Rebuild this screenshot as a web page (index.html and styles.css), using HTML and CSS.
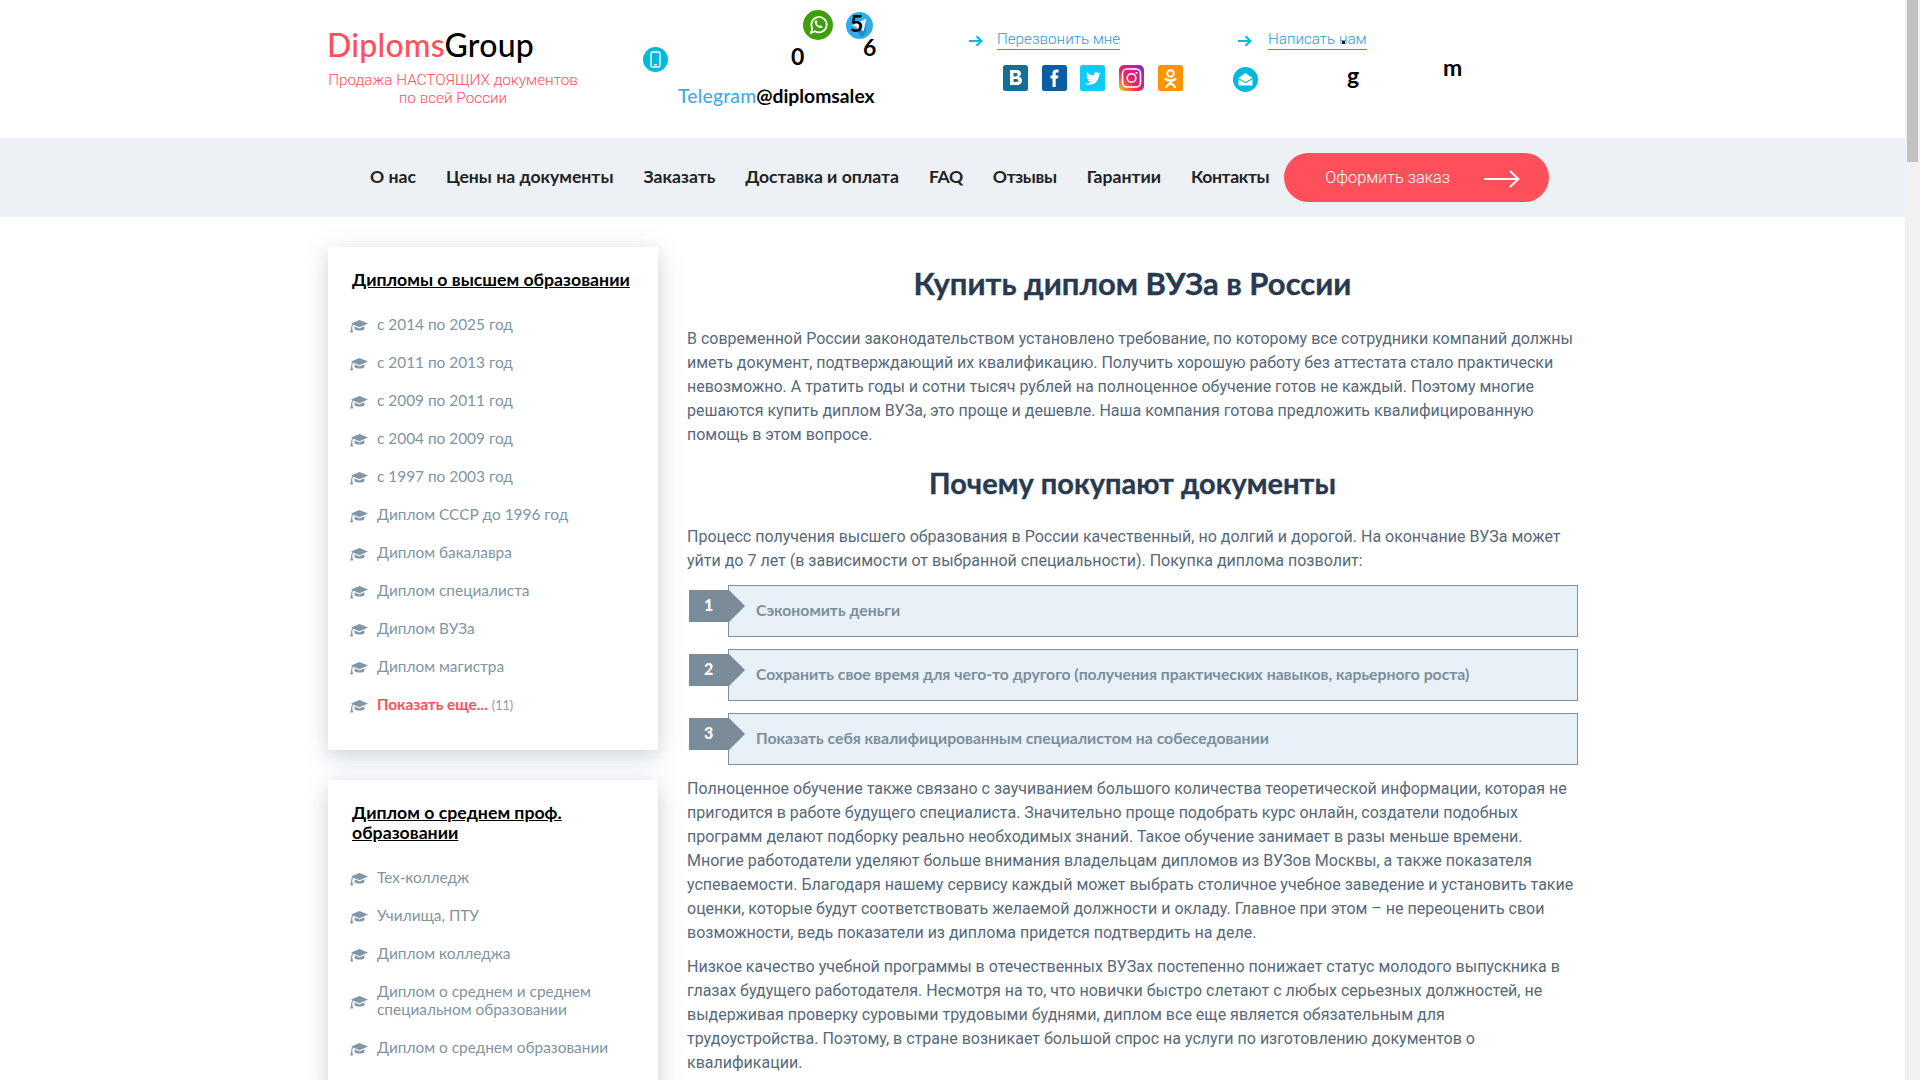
FILE: index.html
```html
<!DOCTYPE html>
<html lang="ru">
<head>
<meta charset="utf-8">
<title>Купить диплом ВУЗа в России</title>
<link rel="stylesheet" href="styles.css">
</head>
<body>
<svg class="defs" width="0" height="0" aria-hidden="true">
  <symbol id="cap" viewBox="0 0 18 14">
    <path d="M9.5 1 18 4.6 9.5 8.2 3.6 5.7 C2.6 6.6 2.2 7.8 2.2 9 L3 13.6 H0.2 L1.2 9 C1.2 7.4 1.7 6 2.6 5.2 L1 4.6Z"/>
    <path d="M4.6 7.3 9.5 9.4 14.4 7.3 V10.2 C13 12 6 12 4.6 10.2Z"/>
  </symbol>
  <symbol id="arrow" viewBox="0 0 14 12">
    <path d="M0 6H12M7.5 1.2 12.5 6 7.5 10.8" fill="none" stroke="#00b9dd" stroke-width="2"/>
  </symbol>
</svg>
<div class="page">
<header class="top">
  <div class="container top-inner">
    <div class="brand">
      <div class="logo"><span class="logo-red">Diploms</span>Group</div>
      <div class="slogan">Продажа НАСТОЯЩИХ документов<br>по всей России</div>
    </div>
    <div class="contact">
      <svg class="ic ic-wa" viewBox="0 0 30 30"><circle cx="15" cy="15" r="15" fill="#3f9e0c"/><path d="M8 23l1.3-4.6A7.7 7.7 0 1 1 12 21.2z" fill="none" stroke="#fff" stroke-width="1.8"/><path d="M12.3 10.6c.6-.6 1.3-.4 1.6.4l.4 1c.1.4-.5 1-.7 1.3.6 1.3 1.6 2.2 2.9 2.8.4-.3.9-1 1.3-.8l1.100.6c.7.4.7 1 .2 1.6-1 1-3 .7-5-.9-2.300-1.900-3-4.600-1.800-6z" fill="#fff"/></svg>
      <svg class="ic ic-tg" viewBox="0 0 28 28"><circle cx="14" cy="14" r="14" fill="#35ace1"/><path d="M14 24l-3-8 9-8 1 12-3 6a14 14 0 0 1-4-2z" fill="#1f8fc6"/><path d="M21 7 6 14l5 1.500 1.500 5 2.300-3 3.500 2.500z" fill="#fff"/><path d="M21 7l-9 9 .5 4.500 1-3.500z" fill="#b9dff2"/></svg>
      <svg class="ic ic-phone" viewBox="0 0 25 25"><circle cx="12.500" cy="12.500" r="12.500" fill="#00b9dd"/><rect x="8" y="5" width="9" height="15" rx="1.600" fill="none" stroke="#fff" stroke-width="1.400"/><path d="M11 17.800h3" stroke="#fff" stroke-width="1.200"/></svg>
      <span class="stray stray-5">5</span>
      <span class="stray stray-0">0</span>
      <span class="stray stray-6">6</span>
      <div class="tg-line"><span class="tg-blue">Telegram</span>@diplomsalex</div>
    </div>
    <div class="action action-call">
      <div class="action-link">
        <svg class="arrow"><use href="#arrow"/></svg>
        <a class="dash">Перезвонить мне</a>
      </div>
      <div class="socials">
        <svg class="soc" viewBox="0 0 25 26"><rect width="25" height="26" rx="2.500" fill="#116f98"/><path d="M7 5h6.500c3 0 4.500 1.400 4.500 3.600 0 1.500-.8 2.600-2 3.100 1.800.4 3 1.700 3 3.700 0 2.700-2 4.600-5.200 4.600H7zM10.500 8v3.400h2.300c1.100 0 1.700-.6 1.700-1.700S13.900 8 12.800 8zM10.500 14v3.100h2.800c1.200 0 1.900-.6 1.900-1.600s-.7-1.500-1.900-1.500z" fill="#fff" fill-rule="evenodd"/></svg>
        <svg class="soc" viewBox="0 0 25 26"><rect width="25" height="26" rx="2.500" fill="#0b5ea2"/><path d="M10.500 22V13.500H8.500V10.500H10.500V8.500C10.500 6 12 4.500 14.500 4.500H16.500V7.500H15C14 7.500 13.700 8 13.700 8.800V10.500H16.400L16 13.500H13.700V22z" fill="#fff"/></svg>
        <svg class="soc" viewBox="0 0 25 26"><rect width="25" height="26" rx="2.500" fill="#0dcdf7"/><path d="M4.500 18.500c6 3 14 .5 14.500-8.500l2-2-2.300.6c-1.400-2.400-5.400-1.200-4.700 1.900-2.600 0-5-1.200-6.800-3.300-1 2-.3 3.600 1 4.800l-1.600-.4c.1 1.700 1.100 2.800 2.800 3.300l-1.600.1c.5 1.200 1.500 1.900 3 2-1.800 1.200-3.400 1.600-6.300 1.500z" fill="#fff"/></svg>
        <svg class="soc" viewBox="0 0 25 26"><defs><linearGradient id="ig" x1="0" y1="1" x2="1" y2="0"><stop offset="0" stop-color="#fdc830"/><stop offset=".4" stop-color="#f0245a"/><stop offset=".75" stop-color="#c3209e"/><stop offset="1" stop-color="#5a35c8"/></linearGradient></defs><rect width="25" height="26" rx="5" fill="url(#ig)"/><rect x="3.500" y="4" width="18" height="18" rx="4.500" fill="none" stroke="#fff" stroke-width="1.600"/><circle cx="12.500" cy="13" r="4.300" fill="none" stroke="#fff" stroke-width="1.600"/><circle cx="17.500" cy="8" r="1.100" fill="#fff"/></svg>
        <svg class="soc" viewBox="0 0 25 26"><rect width="25" height="26" rx="2.500" fill="#ff9400"/><circle cx="12.500" cy="8.500" r="3.300" fill="none" stroke="#fff" stroke-width="2"/><path d="M7.500 14c3 2 7 2 10 0M12.500 16v1.500M8 22l4.500-4.500L17 22" fill="none" stroke="#fff" stroke-width="2.200" stroke-linecap="round"/></svg>
      </div>
    </div>
    <div class="action action-write">
      <div class="action-link">
        <svg class="arrow arrow-write"><use href="#arrow"/></svg>
        <a class="dash">Написать нам</a>
        <span class="stray-dot"></span>
      </div>
      <svg class="ic-mail" viewBox="0 0 25 25"><circle cx="12.500" cy="12.500" r="12.500" fill="#00b9dd"/><path d="M5.500 11 12.500 6l7 5-7 4z" fill="#fff"/><path d="M5.500 12.300l7 4 7-4V18.500h-14z" fill="#fff"/></svg>
      <span class="stray stray-g">g</span>
      <span class="stray stray-m">m</span>
    </div>
  </div>
</header>

<nav class="nav">
  <div class="container nav-inner">
    <a>О нас</a><a>Цены на документы</a><a>Заказать</a><a>Доставка и оплата</a><a class="tight">FAQ</a><a class="tight">Отзывы</a><a>Гарантии</a><a class="tight">Контакты</a>
    <button class="order">Оформить заказ
      <svg class="order-arrow" viewBox="0 0 36 18"><path d="M0 9H34.500M26 1 34.500 9 26 17" fill="none" stroke="#fff" stroke-width="1.800"/></svg>
    </button>
  </div>
</nav>

<div class="container content">
  <aside class="side">
    <section class="card">
      <h3 class="card-title">Дипломы о высшем образовании</h3>
      <ul class="menu">
        <li><svg class="cap"><use href="#cap"/></svg><a>с 2014 по 2025 год</a></li>
        <li><svg class="cap"><use href="#cap"/></svg><a>с 2011 по 2013 год</a></li>
        <li><svg class="cap"><use href="#cap"/></svg><a>с 2009 по 2011 год</a></li>
        <li><svg class="cap"><use href="#cap"/></svg><a>с 2004 по 2009 год</a></li>
        <li><svg class="cap"><use href="#cap"/></svg><a>с 1997 по 2003 год</a></li>
        <li><svg class="cap"><use href="#cap"/></svg><a>Диплом СССР до 1996 год</a></li>
        <li><svg class="cap"><use href="#cap"/></svg><a>Диплом бакалавра</a></li>
        <li><svg class="cap"><use href="#cap"/></svg><a>Диплом специалиста</a></li>
        <li><svg class="cap"><use href="#cap"/></svg><a>Диплом ВУЗа</a></li>
        <li><svg class="cap"><use href="#cap"/></svg><a>Диплом магистра</a></li>
        <li><svg class="cap"><use href="#cap"/></svg><a class="more">Показать еще...</a><span class="count">(11)</span></li>
      </ul>
    </section>
    <section class="card">
      <h3 class="card-title">Диплом о среднем проф.<br>образовании</h3>
      <ul class="menu">
        <li><svg class="cap"><use href="#cap"/></svg><a>Тех-колледж</a></li>
        <li><svg class="cap"><use href="#cap"/></svg><a>Училища, ПТУ</a></li>
        <li><svg class="cap"><use href="#cap"/></svg><a>Диплом колледжа</a></li>
        <li><svg class="cap"><use href="#cap"/></svg><a>Диплом о среднем и среднем<br>специальном образовании</a></li>
        <li><svg class="cap"><use href="#cap"/></svg><a>Диплом о среднем образовании</a></li>
      </ul>
    </section>
  </aside>
  <main class="main">
    <h1>Купить диплом ВУЗа в России</h1>
    <p>В современной России законодательством установлено требование, по которому все сотрудники компаний должны<br>иметь документ, подтверждающий их квалификацию. Получить хорошую работу без аттестата стало практически<br>невозможно. А тратить годы и сотни тысяч рублей на полноценное обучение готов не каждый. Поэтому многие<br>решаются купить диплом ВУЗа, это проще и дешевле. Наша компания готова предложить квалифицированную<br>помощь в этом вопросе.</p>
    <h2>Почему покупают документы</h2>
    <p>Процесс получения высшего образования в России качественный, но долгий и дорогой. На окончание ВУЗа может<br>уйти до 7 лет (в зависимости от выбранной специальности). Покупка диплома позволит:</p>
    <ol class="steps">
      <li class="step"><span class="num">1</span><div class="step-box">Сэкономить деньги</div></li>
      <li class="step"><span class="num">2</span><div class="step-box">Сохранить свое время для чего-то другого (получения практических навыков, карьерного роста)</div></li>
      <li class="step"><span class="num">3</span><div class="step-box">Показать себя квалифицированным специалистом на собеседовании</div></li>
    </ol>
    <p>Полноценное обучение также связано с заучиванием большого количества теоретической информации, которая не<br>пригодится в работе будущего специалиста. Значительно проще подобрать курс онлайн, создатели подобных<br>программ делают подборку реально необходимых знаний. Такое обучение занимает в разы меньше времени.<br>Многие работодатели уделяют больше внимания владельцам дипломов из ВУЗов Москвы, а также показателя<br>успеваемости. Благодаря нашему сервису каждый может выбрать столичное учебное заведение и установить такие<br>оценки, которые будут соответствовать желаемой должности и окладу. Главное при этом – не переоценить свои<br>возможности, ведь показатели из диплома придется подтвердить на деле.</p>
    <p>Низкое качество учебной программы в отечественных ВУЗах постепенно понижает статус молодого выпускника в<br>глазах будущего работодателя. Несмотря на то, что новички быстро слетают с любых серьезных должностей, не<br>выдерживая проверку суровыми трудовыми буднями, диплом все еще является обязательным для<br>трудоустройства. Поэтому, в стране возникает большой спрос на услуги по изготовлению документов о<br>квалификации.</p>
  </main>
</div>
</div>
<div class="scrollbar"><div class="thumb"></div></div>
</body>
</html>
```
FILE: styles.css
```css
* { box-sizing: border-box; }
html, body { margin: 0; height: 100%; overflow: hidden; }
body { font-family: Lato, "Noto Sans", sans-serif; background: #fff; color: #000; }
.defs { position: absolute; }
.page { width: 1906px; }
.container { width: 1250px; margin: 0 auto; }

.top-inner { display: flex; height: 138px; }
.brand { width: 250px; padding-top: 25px; text-align: center; flex: none; }
.logo { font-size: 32px; font-weight: 500; line-height: 40px; letter-spacing: .25px; text-align: left; white-space: nowrap; margin-left: -1px; }
.logo-red { color: #ff4f5a; }
.slogan { font-family: Roboto, sans-serif; font-weight: 300; font-size: 15.3px; line-height: 18px; color: #ff4f5a; margin-top: 6px; white-space: nowrap; }

.contact { position: relative; width: 391px; flex: none; }
.ic, .stray { position: absolute; }
.ic-wa { width: 30px; height: 30px; left: 225px; top: 10px; }
.ic-tg { width: 27px; height: 27px; left: 268px; top: 12px; }
.ic-phone { width: 25px; height: 25px; left: 65px; top: 47px; }
.stray { font-size: 23px; font-weight: 700; line-height: 26px; }
.stray-5 { left: 272px; top: 10px; }
.stray-0 { left: 213px; top: 43px; }
.stray-6 { left: 285px; top: 34px; }
.tg-line { position: absolute; left: 100px; top: 84px; font-size: 19.3px; font-weight: 700; line-height: 24px; white-space: nowrap; }
.tg-blue { color: #3bade3; font-weight: 500; letter-spacing: .2px; }

.action { position: relative; flex: none; padding-top: 30px; }
.action-call { width: 269px; }
.action-link { display: flex; align-items: center; gap: 14px; height: 20px; position: relative; }
.arrow { width: 14px; height: 12px; margin-top: 2px; flex: none; }
.arrow-write { margin-right: 2px; }
.dash { font-family: Roboto, sans-serif; font-weight: 300; font-size: 15.2px; line-height: 19px; color: #2f97dc; border-bottom: 1px solid #2f97dc; white-space: nowrap; }
.socials { display: flex; gap: 13.7px; margin: 15px 0 0 34px; }
.soc { width: 25px; height: 26px; flex: none; }
.stray-dot { position: absolute; left: 104px; top: 11px; width: 3px; height: 3px; background: #222; }
.ic-mail { display: block; width: 25px; height: 25px; margin: 17px 0 0 -5px; }
.stray-g { left: 109px; top: 62px; }
.stray-m { left: 205px; top: 54px; }

.nav { background: #edf0f5; }
.nav-inner { display: flex; align-items: center; height: 79px; padding-left: 42px; gap: 30px; }
.nav a { font-size: 17.6px; font-weight: 700; line-height: 20px; color: #222; white-space: nowrap; margin-top: -2px; }
.nav a.tight { letter-spacing: -.38px; }
.order { display: flex; align-items: center; justify-content: space-between; width: 265px; height: 49px; margin-left: -15px; padding: 0 29px 0 41px; border: 0; border-radius: 25px; background: #ff4f5a; color: #fff; font-family: Roboto, sans-serif; font-weight: 300; font-size: 16.3px; }
.order-arrow { width: 36px; height: 18px; margin-top: 2px; }

.content { display: flex; gap: 29px; padding-top: 30px; }
.side { width: 330px; flex: none; display: flex; flex-direction: column; gap: 30px; }
.card { background: #fff; box-shadow: 0 6px 22px rgba(100, 122, 145, .35); padding: 23px 0 26px 22px; }
.card-title { margin: 0 0 16px 2px; font-size: 17.7px; font-weight: 700; line-height: 20px; text-decoration: underline; color: #000; }
.menu { list-style: none; margin: 0; padding: 0; }
.menu li { display: flex; align-items: center; gap: 9px; min-height: 38px; padding: 9px 0 11px; font-size: 15.4px; line-height: 18px; color: #7f95a3; }
.cap { width: 18px; height: 14px; flex: none; fill: #7f97a8; margin-top: 4px; }
.more { color: #ff4f5a; font-weight: 700; }
.count { font-size: 12.5px; line-height: 14px; margin: 3px 0 0 -5px; color: #8a9aa6; }

.main { width: 891px; flex: none; color: #56697a; }
.main h1 { margin: 16px 0 24px; font-size: 31px; font-weight: 700; line-height: 40px; text-align: center; color: #293a50; -webkit-text-stroke: .35px #293a50; }
.main h2 { margin: 16px 0 22px; font-size: 29px; font-weight: 700; line-height: 40px; text-align: center; color: #293a50; -webkit-text-stroke: .35px #293a50; }
.main p { margin: 0 0 10px; font-family: Roboto, sans-serif; font-size: 16px; line-height: 24px; white-space: nowrap; }
.steps { list-style: none; margin: 12px 0 12px; padding: 0; display: flex; flex-direction: column; gap: 12px; }
.step { position: relative; padding-left: 41px; }
.step-box { display: flex; align-items: center; height: 52px; padding: 0 0 4px 27px; background: #e8f0f8; border: 1px solid #7a8f9f; font-size: 15.75px; font-weight: 700; color: #7b8e9b; }
.num { position: absolute; left: 2px; top: 5px; width: 56px; height: 32px; padding-left: 15px; line-height: 29px; background: #7a8c99; clip-path: polygon(0 0, 40px 0, 56px 50%, 40px 100%, 0 100%); color: #fff; font-weight: 900; font-size: 16px; }

.scrollbar { position: fixed; top: 0; right: 0; bottom: 0; width: 15px; background: #f1f1f1; }
.thumb { width: 11px; height: 162px; margin-left: 2px; background: #c1c1c1; }
```
